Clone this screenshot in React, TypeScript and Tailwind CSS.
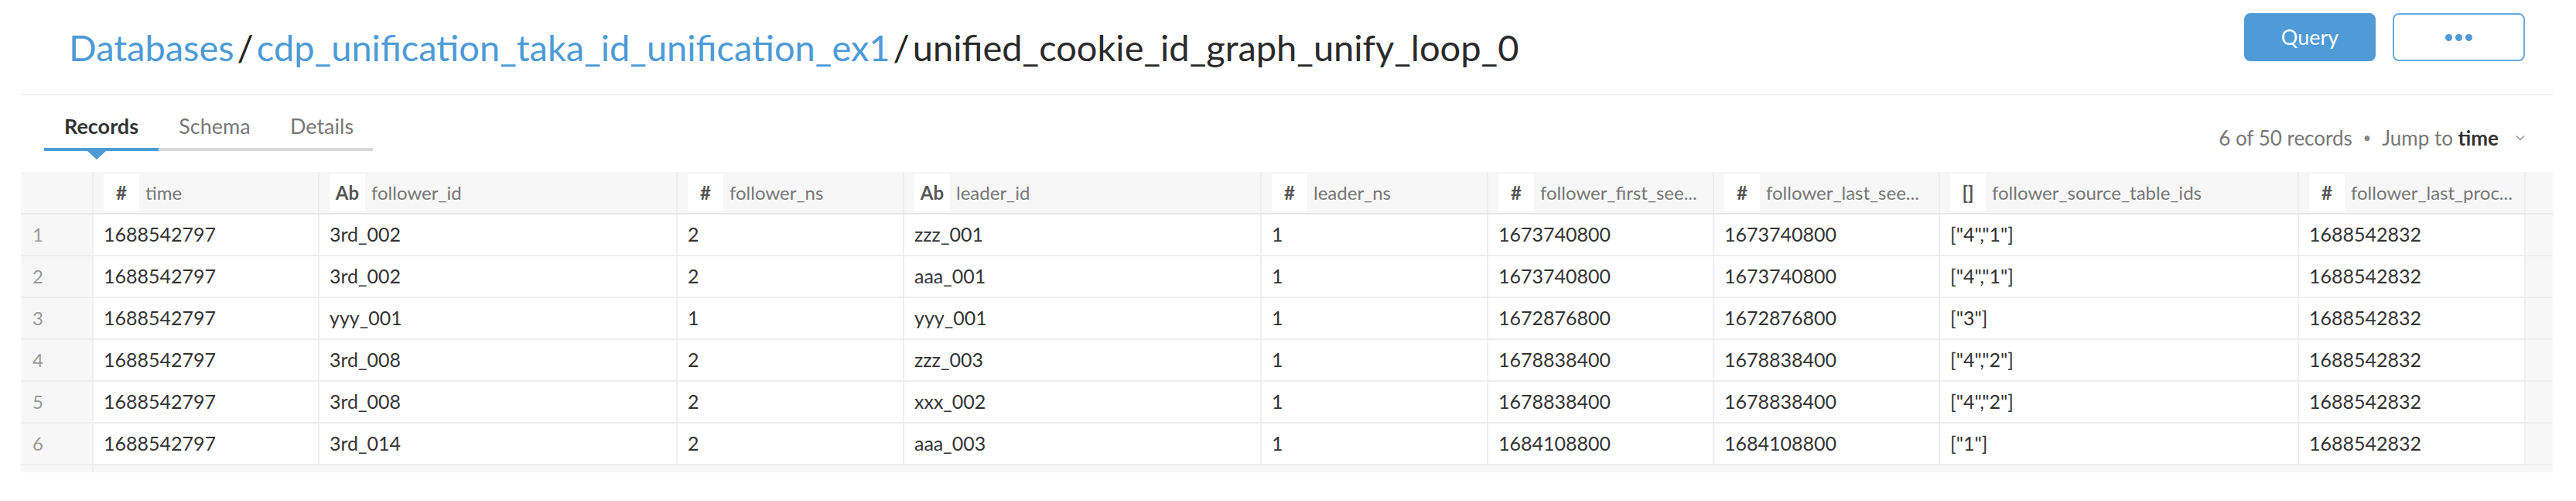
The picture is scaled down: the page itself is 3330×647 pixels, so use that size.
import React from "react";

const cols = [
  { name: "time", type: "#", w: "w-[292px]" },
  { name: "follower_id", type: "Ab", w: "w-[463px]" },
  { name: "follower_ns", type: "#", w: "w-[293px]" },
  { name: "leader_id", type: "Ab", w: "w-[462px]" },
  { name: "leader_ns", type: "#", w: "w-[293px]" },
  { name: "follower_first_see...", type: "#", w: "w-[292px]" },
  { name: "follower_last_see...", type: "#", w: "w-[292px]" },
  { name: "follower_source_table_ids", type: "[]", w: "w-[464px]" },
  { name: "follower_last_proc...", type: "#", w: "w-[293px]" },
];

const rows = [
  ["1688542797", "3rd_002", "2", "zzz_001", "1", "1673740800", "1673740800", '["4","1"]', "1688542832"],
  ["1688542797", "3rd_002", "2", "aaa_001", "1", "1673740800", "1673740800", '["4","1"]', "1688542832"],
  ["1688542797", "yyy_001", "1", "yyy_001", "1", "1672876800", "1672876800", '["3"]', "1688542832"],
  ["1688542797", "3rd_008", "2", "zzz_003", "1", "1678838400", "1678838400", '["4","2"]', "1688542832"],
  ["1688542797", "3rd_008", "2", "xxx_002", "1", "1678838400", "1678838400", '["4","2"]', "1688542832"],
  ["1688542797", "3rd_014", "2", "aaa_003", "1", "1684108800", "1684108800", '["1"]', "1688542832"],
];

const App = () => {
  return (
    <div className="w-[3330px] h-[647px] bg-white font-['Lato','Noto_Sans',sans-serif] overflow-hidden">
      <div className="ml-[27px] w-[3273px]">
        {/* Header */}
        <div className="flex items-start justify-between h-[123px] border-b-2 border-[#efefef]">
          <div className="pt-[30px] pl-[62px] flex items-baseline text-[47px] leading-[62px]">
            <span className="text-[#4d9bd6]">Databases</span>
            <span className="text-[#222] px-[4px]">/</span>
            <span className="text-[#4d9bd6]">cdp_unification_taka_id_unification_ex1</span>
            <span className="text-[#222] px-[4px]">/</span>
            <span className="text-[#2a2a2a]">unified_cookie_id_graph_unify_loop_0</span>
          </div>
          <div className="pt-[17px] pr-[36px] flex gap-[22px]">
            <button className="w-[170px] h-[62px] rounded-[8px] bg-[#4f9bd7] text-white text-[27px]">
              Query
            </button>
            <button className="w-[171px] h-[62px] rounded-[8px] border-2 border-[#6aaae0] bg-white flex items-center justify-center gap-[4px]">
              <span className="w-[9px] h-[9px] rounded-full bg-[#4f9bd7]" />
              <span className="w-[9px] h-[9px] rounded-full bg-[#4f9bd7]" />
              <span className="w-[9px] h-[9px] rounded-full bg-[#4f9bd7]" />
            </button>
          </div>
        </div>

        {/* Tabs + meta */}
        <div className="flex items-start justify-between h-[99px]">
          <div className="pt-[24px] pl-[30px]">
            <div className="flex text-[27px] leading-[32px]">
              <div className="w-[148px] text-center font-bold text-[#333]">Records</div>
              <div className="w-[145px] text-center text-[#777]">Schema</div>
              <div className="w-[132px] text-center text-[#777]">Details</div>
            </div>
            <div className="mt-[12px] flex items-center h-[4px] w-[425px] bg-[#d8d8d8] relative">
              <div className="w-[148px] h-[4px] bg-[#4d9bd6]" />
              <div className="absolute left-[56px] top-[4px] w-0 h-0 border-l-[12px] border-r-[12px] border-t-[11px] border-l-transparent border-r-transparent border-t-[#4d9bd6]" />
            </div>
          </div>
          <div className="pt-[40px] pr-[36px] flex items-center text-[26px] leading-[30px] text-[#777]">
            <span>6 of 50 records</span>
            <span className="px-[15px] text-[14px] text-[#888]">●</span>
            <span>Jump to&nbsp;</span>
            <span className="text-[#333] font-bold">time</span>
            <svg className="ml-[22px] w-[12px] h-[8px]" viewBox="0 0 12 8" fill="none" stroke="#999" strokeWidth="1.5">
              <path d="M1 1.5l5 5 5-5" />
            </svg>
          </div>
        </div>

        {/* Table */}
        <div className="flex flex-col">
          <div className="flex h-[55px] bg-[#f7f7f7] border-b-2 border-[#e8e8e8]">
            <div className="w-[94px] border-r-2 border-[#eeeeee]" />
            {cols.map((c) => (
              <div key={c.name} className={`${c.w} flex items-center pl-[13px] border-r-2 border-[#eeeeee]`}>
                <div className="w-[46px] h-[47px] bg-white flex items-center justify-center text-[24px] font-bold text-[#555]">
                  {c.type}
                </div>
                <span className="pl-[8px] text-[24px] text-[#777] whitespace-nowrap">{c.name}</span>
              </div>
            ))}
            <div className="flex-1" />
          </div>
          {rows.map((r, i) => (
            <div key={i} className="flex h-[54px] border-b-2 border-[#eeeeee]">
              <div className="w-[94px] bg-[#f7f7f7] flex items-center pl-[15px] text-[24px] text-[#999] border-r-2 border-[#eeeeee]">
                {i + 1}
              </div>
              {r.map((v, j) => (
                <div key={j} className={`${cols[j].w} flex items-center pl-[13px] text-[25px] text-[#333] bg-white border-r-2 border-[#eeeeee] whitespace-nowrap`}>
                  {v}
                </div>
              ))}
              <div className="flex-1 bg-[#f7f7f7]" />
            </div>
          ))}
          <div className="flex h-[9px] bg-[#f7f7f7]">
            <div className="w-[94px] border-r-2 border-[#eeeeee]" />
          </div>
        </div>
      </div>
    </div>
  );
};

export default App;
